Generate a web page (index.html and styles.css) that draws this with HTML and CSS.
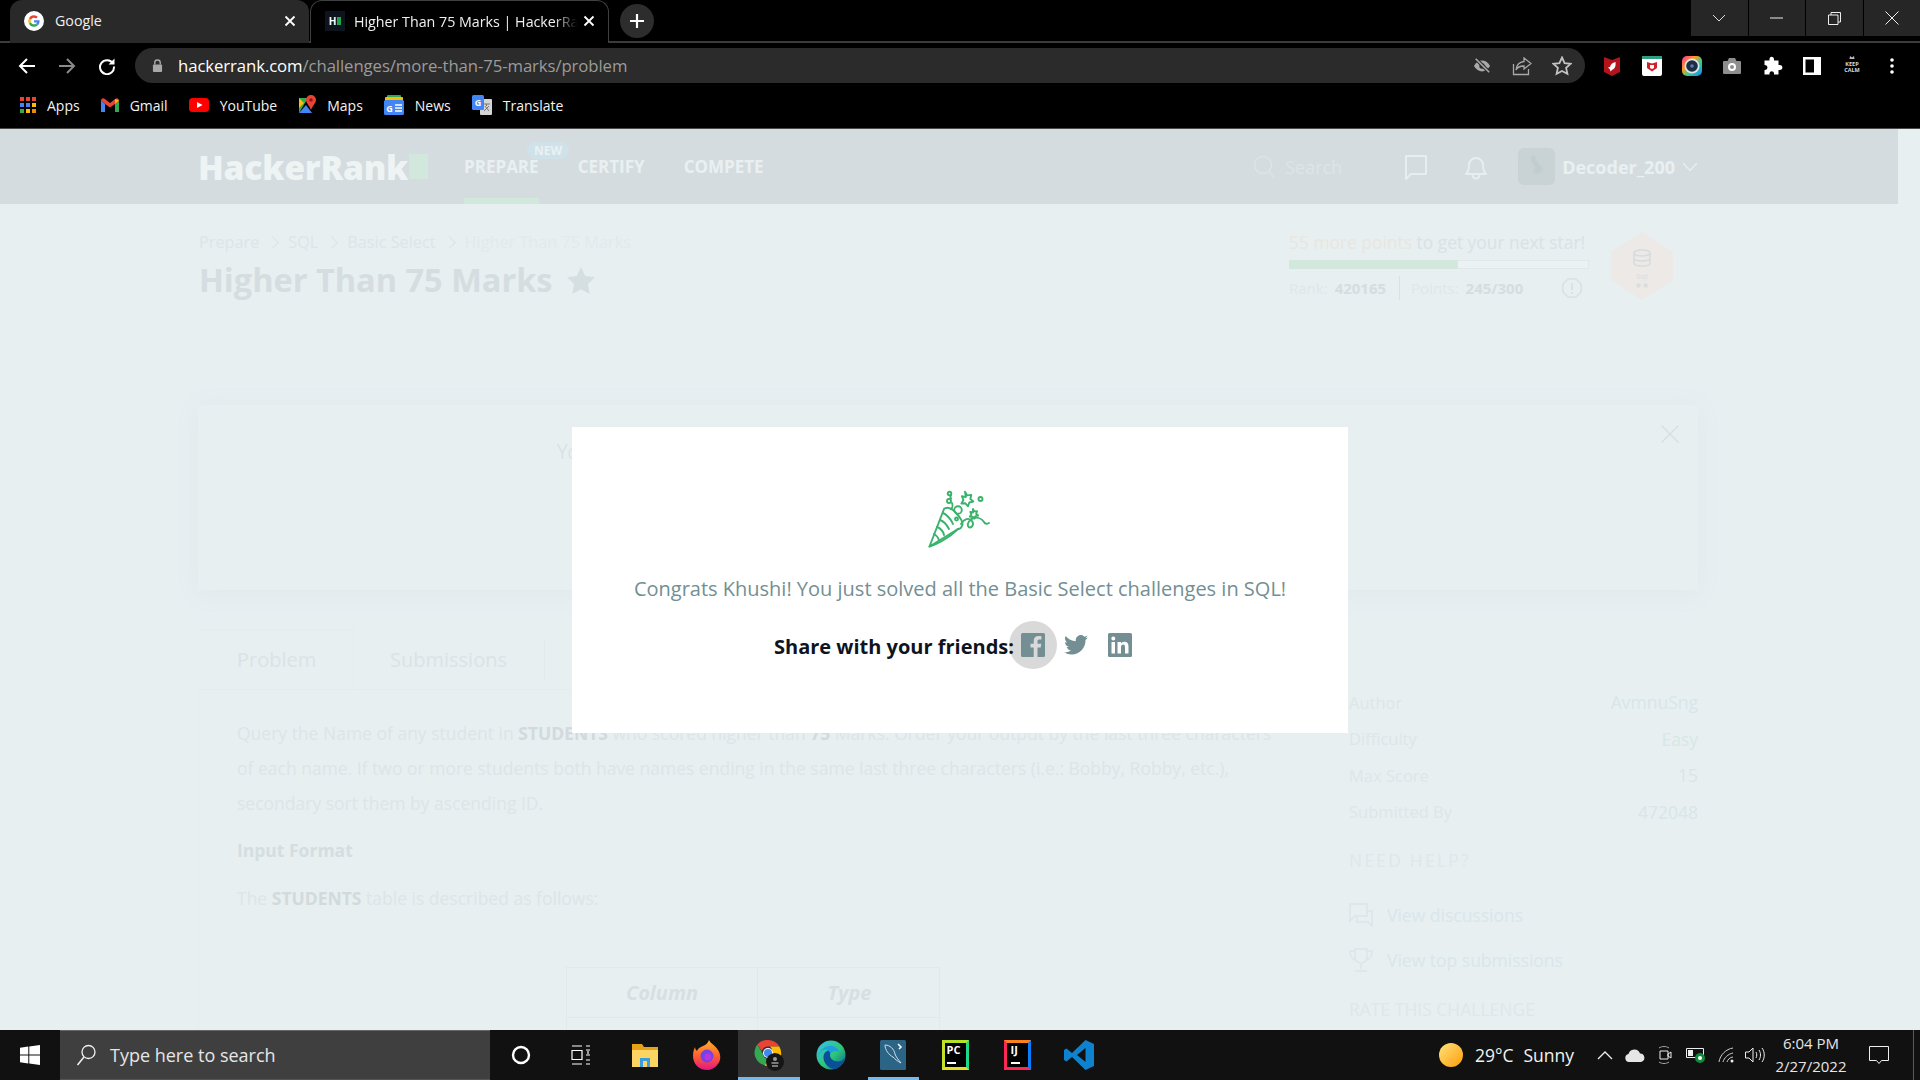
FILE: index.html
```html
<!DOCTYPE html>
<html lang="en">
<head>
<meta charset="utf-8">
<title>Higher Than 75 Marks | HackerRank</title>
<link rel="stylesheet" href="styles.css">
</head>
<body>
<div class="screen">
  <header class="chrome">
    <div class="tabstrip">
      <div class="tab tab-idle">
        <svg class="fav" viewBox="0 0 24 24" width="20" height="20"><circle cx="12" cy="12" r="12" fill="#fff"/><path d="M12 5.2a6.8 6.8 0 0 1 4.6 1.8l-2 2A4 4 0 0 0 8.300 10.500L5.900 8.800A6.800 6.800 0 0 1 12 5.200z" fill="#ea4335"/><path d="M5.900 8.800l2.400 1.800a4 4 0 0 0 0 2.800l-2.400 1.800a6.800 6.800 0 0 1 0-6.400z" fill="#fbbc05"/><path d="M5.900 15.200l2.400-1.800a4 4 0 0 0 6 1.900l2.300 1.800A6.800 6.800 0 0 1 5.900 15.200z" fill="#34a853"/><path d="M18.700 11h-6.600v2.700h3.800a3.300 3.300 0 0 1-1.600 1.600l2.300 1.800c1.400-1.300 2.300-3.200 2.100-6.100z" fill="#4285f4"/></svg>
        <span class="tab-title">Google</span>
        <svg class="tab-x" viewBox="0 0 12 12" width="12" height="12"><path d="M1.500 1.500l9 9M10.500 1.500l-9 9" stroke="#fff" stroke-width="1.800"/></svg>
      </div>
      <div class="tab tab-active">
        <span class="hr-fav"><span class="hr-fav-h">H</span><span class="hr-fav-b"></span></span>
        <span class="tab-title tab-fade">Higher Than 75 Marks | HackerRa</span>
        <svg class="tab-x" viewBox="0 0 12 12" width="12" height="12"><path d="M1.500 1.500l9 9M10.500 1.500l-9 9" stroke="#fff" stroke-width="1.800"/></svg>
      </div>
      <div class="newtab"><svg viewBox="0 0 16 16" width="16" height="16"><path d="M8 1v14M1 8h14" stroke="#fff" stroke-width="2.200"/></svg></div>
      <div class="winctl">
        <div class="winbtn"><svg viewBox="0 0 14 8" width="14" height="8"><path d="M1 1l6 6 6-6" fill="none" stroke="#ddd"/></svg></div>
        <div class="winbtn"><svg viewBox="0 0 13 2" width="13" height="2"><path d="M0 1h13" stroke="#eee"/></svg></div>
        <div class="winbtn"><svg viewBox="0 0 13 13" width="13" height="13"><path d="M.5 3h9.500v9.500H.5zM3 3V.5h9.500V10H10" fill="none" stroke="#eee"/></svg></div>
        <div class="winbtn"><svg viewBox="0 0 14 14" width="14" height="14"><path d="M.5.500l13 13M13.500.500l-13 13" stroke="#eee"/></svg></div>
      </div>
    </div>
    <div class="toolbar">
      <div class="navbtns">
        <svg viewBox="0 0 18 18" width="18" height="18"><path d="M17 9H2M9 2L2 9l7 7" fill="none" stroke="#fff" stroke-width="2"/></svg>
        <svg viewBox="0 0 18 18" width="18" height="18"><path d="M1 9h15M9 2l7 7-7 7" fill="none" stroke="#8a8a8a" stroke-width="2"/></svg>
        <svg viewBox="0 0 18 18" width="18" height="18"><path d="M15 6.500A7 7 0 1 0 16 9.500" fill="none" stroke="#fff" stroke-width="2"/><path d="M16.500 1.500v6h-6z" fill="#fff"/></svg>
      </div>
      <div class="omnibox">
        <svg class="lock" viewBox="0 0 12 14" width="11" height="13"><path d="M3 6V4a3 3 0 0 1 6 0v2" fill="none" stroke="#a8a8a8" stroke-width="1.500"/><rect x="1" y="6" width="10" height="8" rx="1" fill="#a8a8a8"/></svg>
        <span class="url"><span class="url-host">hackerrank.com</span>/challenges/more-than-75-marks/problem</span>
        <div class="omni-icons">
          <svg viewBox="0 0 20 20" width="20" height="18"><path d="M1 10c2.500-4 5.500-6 9-6s6.500 2 9 6c-2.500 4-5.500 6-9 6s-6.500-2-9-6z" fill="#a9a9a9"/><circle cx="10" cy="10" r="3" fill="#2b2b2b"/><path d="M3 2l15 15" stroke="#2b2b2b" stroke-width="4"/><path d="M3 2l15 15" stroke="#a9a9a9" stroke-width="1.800"/></svg>
          <svg viewBox="0 0 20 20" width="20" height="20"><path d="M1.500 8v10.500h15V13" fill="none" stroke="#a9a9a9" stroke-width="1.300"/><path d="M12 2l7 5.500-7 5.500V10c-4 0-6.500 1-8 4 .5-5 3.500-8 8-8.500z" fill="none" stroke="#a9a9a9" stroke-width="1.300"/></svg>
          <svg viewBox="0 0 20 20" width="20" height="20"><path d="M10 1.500l2.600 5.600 6 .7-4.500 4.100 1.300 6L10 15l-5.400 2.900 1.300-6L1.400 7.800l6-.7z" fill="none" stroke="#c2c2c2" stroke-width="1.800"/></svg>
        </div>
      </div>
      <div class="ext-icons">
        <svg viewBox="0 0 20 20" width="40" height="20"><path d="M2 1l8 3 8-3v15l-8 4-8-4z" fill="#b3141c"/><path d="M13.500 6c-3 .5-5 2.500-5.500 5l-2 .5 2 2 .5 2 2-2c2.500-.5 3.500-4 3-7.500z" fill="#fff"/></svg>
        <svg viewBox="0 0 20 20" width="40" height="20"><rect width="20" height="20" rx="2" fill="#fff"/><rect width="20" height="3" fill="#2f9e7f"/><path d="M5 6l5 1.500L15 6v6l-5 3.500L5 12z" fill="#d2202a"/><path d="M8 9v3l2 1 2-1V9z" fill="#fff"/></svg>
        <svg viewBox="0 0 20 20" width="40" height="20"><defs><linearGradient id="ring" x1="0" y1="0" x2="1" y2="1"><stop offset="0" stop-color="#ff2fa0"/><stop offset=".35" stop-color="#ff9a1f"/><stop offset=".65" stop-color="#21d0a0"/><stop offset="1" stop-color="#2b7bff"/></linearGradient></defs><rect width="20" height="20" rx="5" fill="url(#ring)"/><circle cx="10" cy="10" r="7.500" fill="#dfe6ee"/><circle cx="10" cy="10" r="5.800" fill="#1d2d44"/><circle cx="10" cy="10" r="1.800" fill="#5b7ea8"/></svg>
        <svg viewBox="0 0 20 20" width="40" height="20"><path d="M1 6a1 1 0 0 1 1-1h3.500l1.500-3h6l1.500 3H18a1 1 0 0 1 1 1v11a1 1 0 0 1-1 1H2a1 1 0 0 1-1-1z" fill="#8e8e8e"/><circle cx="10" cy="11" r="4" fill="#fff"/><circle cx="10" cy="11" r="2" fill="#8e8e8e"/></svg>
        <svg viewBox="0 0 20 20" width="40" height="20"><path d="M8 1.500a2.300 2.300 0 0 1 4 1.500v1.500h4.500V9H18a2.500 2.500 0 0 1 0 5h-1.500v4.500H12V17a2.300 2.300 0 0 0-4.500 0v1.500H2.500V14H3a2.500 2.500 0 0 0 0-5h-.5V4.500H7.500V3c0-.6.200-1.100.5-1.500z" fill="#fff"/></svg>
        <svg viewBox="0 0 18 18" width="40" height="18"><path d="M0 0h18v18H0zM2.500 2.500v13H11v-13z" fill="#fff" fill-rule="evenodd"/></svg>
        <svg viewBox="0 0 20 22" width="40" height="22"><path d="M7.500 4L8 1l2 1.500L12 1l.5 3z" fill="#bbb"/><text class="keep" x="10" y="10.500" text-anchor="middle">KEEP</text><text class="keep" x="10" y="17" text-anchor="middle">CALM</text></svg>
        <svg viewBox="0 0 4 16" width="40" height="16"><circle cx="2" cy="2" r="1.800" fill="#fff"/><circle cx="2" cy="8" r="1.800" fill="#fff"/><circle cx="2" cy="14" r="1.800" fill="#fff"/></svg>
      </div>
    </div>
    <div class="bookmarks">
      <div class="bm">
        <svg viewBox="0 0 16 16" width="16" height="16"><g><rect x="0" y="0" width="4" height="4" fill="#ea4335"/><rect x="6" y="0" width="4" height="4" fill="#ea4335"/><rect x="12" y="0" width="4" height="4" fill="#ea4335"/><rect x="0" y="6" width="4" height="4" fill="#4285f4"/><rect x="6" y="6" width="4" height="4" fill="#4285f4"/><rect x="12" y="6" width="4" height="4" fill="#fbbc05"/><rect x="0" y="12" width="4" height="4" fill="#34a853"/><rect x="6" y="12" width="4" height="4" fill="#fbbc05"/><rect x="12" y="12" width="4" height="4" fill="#ea8a05"/></g></svg>
        <span>Apps</span>
      </div>
      <div class="bm">
        <svg viewBox="0 0 18 14" width="18" height="14"><path d="M0 2.500V14h4V6z" fill="#4285f4"/><path d="M18 2.500V14h-4V6z" fill="#34a853"/><path d="M0 2.500C0 .5 2 -.5 3.500.7L9 5l5.500-4.300C16-.5 18 .5 18 2.500L14 6 9 9.500 4 6z" fill="#ea4335"/><path d="M14 .9l4 1.600L14 6z" fill="#fbbc05"/></svg>
        <span>Gmail</span>
      </div>
      <div class="bm">
        <svg viewBox="0 0 20 14" width="20" height="14"><rect width="20" height="14" rx="3.500" fill="#f00"/><path d="M8 4l5.500 3L8 10z" fill="#fff"/></svg>
        <span>YouTube</span>
      </div>
      <div class="bm">
        <svg viewBox="0 0 18 20" width="18" height="20"><path d="M1 3h9L1 18z" fill="#34a853"/><path d="M1 18l7-8 6 8z" fill="#4285f4"/><path d="M1 3l5 5-5 5z" fill="#fbbc05"/><path d="M13 0a5 5 0 0 1 5 5c0 3-3.500 5.500-5 10-1.500-4.500-5-7-5-10a5 5 0 0 1 5-5z" fill="#ea4335"/><circle cx="13" cy="5" r="1.800" fill="#8d1a12"/></svg>
        <span>Maps</span>
      </div>
      <div class="bm">
        <svg viewBox="0 0 20 20" width="20" height="20"><rect x="3" y="0" width="14" height="6" rx="1" fill="#34a853"/><rect x="1" y="2" width="18" height="5" rx="1" fill="#fbbc05"/><rect y="5" width="20" height="15" rx="1.500" fill="#4285f4"/><text class="news-g" x="5.500" y="16.500" text-anchor="middle">G</text><path d="M11 10h7M11 13h7M11 16h7" stroke="#fff" stroke-width="1.500"/></svg>
        <span>News</span>
      </div>
      <div class="bm">
        <svg viewBox="0 0 20 20" width="20" height="20"><rect x="8" y="4" width="12" height="16" rx="1" fill="#d5d5d5"/><rect width="12" height="15" rx="1.500" fill="#4285f4"/><text class="news-g" x="6" y="10.500" text-anchor="middle">G</text><path d="M11 9h7M14.500 9v2M12 16l5-5M13 11l4 5" stroke="#777" stroke-width="1"/></svg>
        <span>Translate</span>
      </div>
    </div>
  </header>

  <main class="page">
    <nav class="hr-header">
      <div class="logo"><span>HackerRank</span><span class="logo-block"></span></div>
      <div class="hr-nav">
        <a class="hr-link hr-link-active">PREPARE<span class="new-badge">NEW</span></a>
        <a class="hr-link">CERTIFY</a>
        <a class="hr-link">COMPETE</a>
      </div>
      <div class="hr-right">
        <svg class="ic-search" viewBox="0 0 22 24" width="22" height="24"><circle cx="10" cy="10" r="8.500" fill="none" stroke="#dce4e7" stroke-width="1.500"/><path d="M16 16.500l5 6" stroke="#dce4e7" stroke-width="1.500"/></svg>
        <span class="hr-search">Search</span>
        <svg class="ic-chat" viewBox="0 0 24 26" width="24" height="26"><path d="M2 2h20v18H7l-5 5z" fill="none" stroke="#e8edef" stroke-width="2" stroke-linejoin="round"/></svg>
        <svg class="ic-bell" viewBox="0 0 24 26" width="24" height="26"><path d="M2 20c2-2 3-4 3-9a7 7 0 0 1 14 0c0 5 1 7 3 9z" fill="none" stroke="#e8edef" stroke-width="2" stroke-linejoin="round"/><path d="M8.500 21a3.500 3.500 0 0 0 7 0" fill="none" stroke="#e8edef" stroke-width="2"/></svg>
        <div class="avatar"><svg viewBox="0 0 37 37" width="37" height="37"><path d="M12 10l4-3 3 6 6 8-3 4-6-7z" fill="#c3cdd0"/><circle cx="18" cy="23" r="3" fill="#bcd0cc"/></svg></div>
        <span class="hr-user">Decoder_200</span>
        <svg class="ic-chev" viewBox="0 0 16 10" width="16" height="10"><path d="M1 1l7 7.500L15 1" fill="none" stroke="#e8edef" stroke-width="1.300"/></svg>
      </div>
    </nav>

    <div class="wrap">
      <section class="titlebar">
        <div class="title-left">
          <div class="crumbs">
            <span>Prepare</span><i class="sep"></i><span>SQL</span><i class="sep"></i><span>Basic Select</span><i class="sep"></i><span class="crumb-last">Higher Than 75 Marks</span>
          </div>
          <div class="title-row">
            <h1>Higher Than 75 Marks</h1>
            <svg viewBox="0 0 32 30" width="30" height="28"><path d="M16 1l4.600 9.700 10.400 1.400-7.600 7.300 1.900 10.600L16 24.800 6.700 30l1.900-10.600L1 12.100l10.400-1.400z" fill="#d5dee1"/></svg>
          </div>
        </div>
        <div class="progress">
          <div class="progress-main">
            <div class="progress-head"><span class="pts">55 more points</span> to get your next star!</div>
            <div class="bar"><div class="bar-fill"></div></div>
            <div class="stats">
              <span>Rank:</span><b>420165</b><i class="vsep"></i><span>Points:</span><b>245/300</b>
              <svg class="ic-info" viewBox="0 0 20 20" width="20" height="20"><path d="M6 1h8l5 5v8l-5 5H6l-5-5V6z" fill="none" stroke="#d9e1e3" stroke-width="1.500" stroke-linejoin="round"/><path d="M10 5v7M10 14v2" stroke="#d9e1e3" stroke-width="1.800"/></svg>
            </div>
          </div>
          <div class="hexbadge">
            <svg viewBox="0 0 62 68" width="62" height="68"><path d="M31 0l31 20v28L31 68 0 48V20z" fill="#ece9e6"/><ellipse cx="31" cy="21" rx="8" ry="3" fill="none" stroke="#d6dcde" stroke-width="1.500"/><path d="M23 21v10c0 4 16 4 16 0V21M23 26c0 4 16 4 16 0" fill="none" stroke="#d6dcde" stroke-width="1.500"/><text class="hex-t" x="31" y="47" text-anchor="middle">Sql</text><text class="hex-s" x="31" y="56" text-anchor="middle">★★</text></svg>
          </div>
        </div>
      </section>

      <section class="notice">
        <p class="notice-text">You did it!</p>
        <svg class="notice-x" viewBox="0 0 18 18" width="18" height="18"><path d="M.5.500l17 17M17.500.500l-17 17" stroke="#d8e0e3" stroke-width="1.500"/></svg>
      </section>

      <section class="content">
        <div class="main">
          <div class="tabs">
            <div class="ctab ctab-active">Problem</div>
            <div class="ctab">Submissions</div>
          </div>
          <article class="problem">
            <p class="para">Query the Name of any student in <b>STUDENTS</b> who scored higher than <b>75</b> Marks. Order your output by the last three characters of each name. If two or more students both have names ending in the same last three characters (i.e.: Bobby, Robby, etc.), secondary sort them by ascending ID.</p>
            <p class="para-h">Input Format</p>
            <p class="para-s">The <b>STUDENTS</b> table is described as follows:</p>
            <div class="tbl">
              <div class="tcell tcell-1">Column</div>
              <div class="tcell">Type</div>
              <div class="tcell tcell-1 trow2"></div>
              <div class="tcell trow2"></div>
            </div>
          </article>
        </div>
        <aside class="side">
          <div class="kv"><span>Author</span><span class="val">AvmnuSng</span></div>
          <div class="kv"><span>Difficulty</span><span class="val val-easy">Easy</span></div>
          <div class="kv"><span>Max Score</span><span class="val val-gray">15</span></div>
          <div class="kv"><span>Submitted By</span><span class="val">472048</span></div>
          <div class="help-h">NEED HELP?</div>
          <div class="help-link help-first">
            <svg viewBox="0 0 24 24" width="24" height="24"><path d="M1 1h17v12H6l-5 5zM8 13v6h11l4 4V8h-5" fill="none" stroke="#dce5e8" stroke-width="1.500"/></svg>
            <span>View discussions</span>
          </div>
          <div class="help-link">
            <svg viewBox="0 0 24 24" width="24" height="24"><path d="M6 1h12v8a6 6 0 0 1-12 0zM6 3H1c0 5 2 8 6 9M18 3h5c0 5-2 8-6 9M12 15v6M6 23h12" fill="none" stroke="#dce5e8" stroke-width="1.500"/></svg>
            <span>View top submissions</span>
          </div>
          <div class="rate-h">RATE THIS CHALLENGE</div>
        </aside>
      </section>
    </div>

    <div class="modal">
      <svg class="party" viewBox="0 0 64 58" width="64" height="58" fill="none" stroke="#39b36b" stroke-width="1.900" stroke-linecap="round" stroke-linejoin="round">
        <path d="M1.500 56.500L16 19c3-3 9 0 12 4 4 4 8 10 6 13 0 0-1 3-4 3z"/>
        <path d="M1.500 56.500C7 55 20 49 30 39"/>
        <path d="M12 30c3 1 7 5 9 9M9 37c3 1 6 4 7 8M6 44c2 1 4 3 5 6M15 23c3 1 8 6 10 11"/>
        <circle cx="30" cy="20" r="3.800"/>
        <circle cx="28.500" cy="29" r="1.500"/>
        <path d="M37 1.800l2.300 3.600 4-.5-1 4 3 2.600-4 1-1.300 3.800-2.600-3-4 .2 2-3.500-1.500-3.800 4 .9z"/>
        <path d="M45 19l1.300 2.400 2.700-.3-.8 2.600 1.900 1.800-2.700.6-1 2.500-1.800-2-2.700.1 1.400-2.300-1-2.500 2.700.6z"/>
        <circle cx="52.500" cy="9" r="2"/>
        <circle cx="21.500" cy="3.500" r="1.800"/>
        <circle cx="21" cy="11" r="2"/>
        <path d="M23 5.500c-1 1-1 1.500 0 3M24 13c1 3 1 4-1 6"/>
        <path d="M33 34c3-5 8-7 11-3 3 4-2 9-4 5-1-3 2-7 6-8 4-1 8 1 10 4 1 2 3 2 5 1"/>
      </svg>
      <p class="congrats">Congrats Khushi! You just solved all the Basic Select challenges in SQL!</p>
      <div class="share">
        <span class="share-label">Share with your friends:</span>
        <span class="share-fb"><svg viewBox="0 0 24 24" width="24" height="24"><path d="M1.500 0h21A1.500 1.500 0 0 1 24 1.500v21a1.500 1.500 0 0 1-1.500 1.500h-6v-9.500h3.200l.5-3.700h-3.700V8.400c0-1.100.3-1.800 1.900-1.800h2V3.200c-.4 0-1.500-.2-2.900-.2-2.900 0-4.800 1.700-4.800 5v2.800H9.500v3.700h3.200V24H1.500A1.500 1.500 0 0 1 0 22.500v-21A1.500 1.500 0 0 1 1.500 0z" fill="#738f93"/></svg></span>
        <svg class="share-tw" viewBox="0 0 24 20" width="24" height="20"><path d="M24 2.400c-.9.400-1.800.7-2.800.8 1-.6 1.800-1.600 2.200-2.700-1 .6-2 1-3.100 1.200A4.900 4.900 0 0 0 11.900 6.200 14 14 0 0 1 1.700.9a4.900 4.900 0 0 0 1.500 6.600c-.8 0-1.600-.2-2.200-.6v.1c0 2.400 1.700 4.400 3.900 4.800-.7.200-1.500.2-2.200.1.600 2 2.400 3.400 4.600 3.400A9.900 9.900 0 0 1 0 17.300 14 14 0 0 0 7.500 19.500c9 0 14-7.500 14-14v-.6c1-.7 1.800-1.500 2.500-2.500z" fill="#738f93"/></svg>
        <svg class="share-in" viewBox="0 0 24 24" width="24" height="24"><path fill-rule="evenodd" d="M1.500 0h21A1.500 1.500 0 0 1 24 1.500v21a1.500 1.500 0 0 1-1.500 1.500h-21A1.500 1.500 0 0 1 0 22.500v-21A1.500 1.500 0 0 1 1.500 0zM3.500 9v11.500H7V9zM5.300 3.500a2 2 0 1 0 0 4 2 2 0 0 0 0-4zM9.500 9v11.500H13v-6c0-1.600.5-3 2.200-3 1.600 0 1.800 1.500 1.800 3.100v5.900h3.500V14c0-3.200-.8-5.300-4.300-5.300-1.700 0-2.700.9-3.200 1.800V9z" fill="#738f93"/></svg>
      </div>
    </div>
  </main>

  <footer class="taskbar">
    <div class="tb-start"><svg viewBox="0 0 20 20" width="20" height="20"><path d="M0 2.800L8.300 1.600v7.900H0zM9.300 1.500L20 0v9.500H9.300zM0 10.500h8.300v7.900L0 17.200zM9.300 10.500H20V20L9.300 18.500z" fill="#fff"/></svg></div>
    <div class="tb-search">
      <svg viewBox="0 0 20 22" width="20" height="22"><circle cx="12.500" cy="8" r="6.500" fill="none" stroke="#f0f0f0" stroke-width="1.300"/><path d="M8 13L1.500 21" stroke="#f0f0f0" stroke-width="1.500"/></svg>
      <span>Type here to search</span>
    </div>
    <div class="tb-item"><svg viewBox="0 0 20 20" width="20" height="20"><circle cx="10" cy="10" r="8" fill="none" stroke="#fff" stroke-width="2.400"/></svg></div>
    <div class="tb-item tb-tview"><svg viewBox="0 0 20 20" width="20" height="20"><path d="M1 1h10M1 19h10M1 5.500h10v9H1zM15 1h4M15 5h4M15 10h4M15 15h4M15 19h4M17 6v3" fill="none" stroke="#fff" stroke-width="1.200"/></svg></div>
    <div class="tb-item"><svg viewBox="0 0 28 28" width="28" height="28"><path d="M1 3h10l2 3h14v4H1z" fill="#e6a117"/><path d="M1 9h26v17H1z" fill="#fcd462"/><path d="M9 17h10v9H9z" fill="#3b9ddd"/><path d="M12 20h4v6h-4z" fill="#fcd462"/></svg></div>
    <div class="tb-item"><svg viewBox="0 0 28 30" width="28" height="30"><defs><linearGradient id="ffx" x1="0" y1="0" x2="0" y2="1"><stop offset="0" stop-color="#ffb52e"/><stop offset=".55" stop-color="#ff5b30"/><stop offset="1" stop-color="#e31587"/></linearGradient></defs><path d="M16 0c1 3 6 5 9 10 3 5 3 10 0 14-3 4-7 6-11 6C6 30 0 24 0 16c0-4 1-7 2-9 0 2 1 3 2 4 1-3 4-4 6-5 3-1 5-3 6-6z" fill="url(#ffx)"/><circle cx="14" cy="16" r="6.500" fill="#7542e5"/><circle cx="15" cy="17" r="3.500" fill="#b833e1"/></svg></div>
    <div class="tb-item tb-active"><svg viewBox="0 0 30 32" width="30" height="32"><path d="M14 1a13 13 0 0 1 11.300 6.500H14a6.500 6.500 0 0 0-6.200 4.500L3.300 5.500A13 13 0 0 1 14 1z" fill="#ea4335"/><path d="M3.300 5.500L9 15a5.500 5.500 0 0 0 5 5l-3.500 6.200A13 13 0 0 1 3.300 5.500z" fill="#34a853"/><path d="M25.300 7.500A13 13 0 0 1 10.500 26.500L17 15a6 6 0 0 0-1-7.500z" fill="#fbbc05"/><circle cx="14" cy="14" r="5" fill="#fff"/><circle cx="14" cy="14" r="4" fill="#4285f4"/><circle cx="21" cy="23" r="9" fill="#151515"/><circle cx="21" cy="20" r="2" fill="#9a9a9a"/><path d="M17.500 24h7M18 27h6" stroke="#9a9a9a" stroke-width="1.500"/></svg></div>
    <div class="tb-item"><svg viewBox="0 0 30 30" width="30" height="30"><defs><linearGradient id="edg" x1="0" y1="0" x2="1" y2="1"><stop offset="0" stop-color="#35c1f1"/><stop offset=".55" stop-color="#2dc774"/><stop offset="1" stop-color="#0c59a4"/></linearGradient></defs><circle cx="15" cy="15" r="14.500" fill="url(#edg)"/><path d="M29 17c-1 3-4 4.500-7 4.500-5 0-8-3-8-6.500 0-2.500 2-4.500 3.500-5.200C13 9 8 11 7.500 16.500 7 23 13 29 19 29c5-1 9-6 10-12z" fill="#0a4f99"/><path d="M14.500 14.500c.2-3 5-4.500 9-2.500-2-5-8-8-14-5C5 9 2 14 2 18 4 8 13 7 14.500 14.500z" fill="#1f9de0"/></svg></div>
    <div class="tb-item tb-open"><svg viewBox="0 0 26 30" width="26" height="30"><rect width="26" height="30" rx="1.500" fill="#2c6485"/><path d="M5 5c5 0 9 4 10 9 1 3 3 5 6 9-4-2-6-4-8-6-4-2-8-7-8-12z" fill="none" stroke="#cfe0ea" stroke-width="1"/><path d="M18 4l3 3-2 2" fill="none" stroke="#fff" stroke-width="1.500"/></svg></div>
    <div class="tb-item"><span class="ide ide-pc"><span>PC</span><i></i></span></div>
    <div class="tb-item"><span class="ide ide-ij"><span>IJ</span><i></i></span></div>
    <div class="tb-item"><svg viewBox="0 0 30 30" width="30" height="30"><path d="M21.500 0L30 4v22l-8.500 4L8 17l-5.500 4.500L0 20v-10l2.500-1.500L8 13zM21.500 8L13 15l8.500 7z" fill="#0f82cf"/></svg></div>
    <div class="tray">
      <span class="sun"></span>
      <span class="temp">29°C</span>
      <span class="cond">Sunny</span>
      <svg class="tr-caret" viewBox="0 0 16 9" width="16" height="9"><path d="M1 8l7-7 7 7" fill="none" stroke="#eee" stroke-width="1.300"/></svg>
      <svg class="tr-cloud" viewBox="0 0 20 13" width="20" height="13"><path d="M4 13a4 4 0 0 1-.5-7.900A6 6 0 0 1 15 4.500 4.300 4.300 0 0 1 16 13z" fill="#e6e6e6"/></svg>
      <svg class="tr-cam" viewBox="0 0 14 20" width="14" height="20"><path d="M2 6h8v8H2zM10 9l3-2v6l-3-2z" fill="none" stroke="#eee"/><path d="M1 3c3-2 7-2 10 0M1 17c3 2 7 2 10 0" fill="none" stroke="#aaa"/></svg>
      <svg class="tr-bat" viewBox="0 0 20 16" width="20" height="16"><path d="M.5 1.500h17v9H.5z" fill="none" stroke="#eee"/><rect x="2" y="3" width="5" height="6" fill="#eee"/><circle cx="14" cy="11" r="5" fill="#0f8a3c"/><circle cx="14" cy="11" r="2" fill="#fff"/></svg>
      <svg class="tr-wifi" viewBox="0 0 20 16" width="20" height="16"><path d="M1 15C2 8 8 2 15 1M5 15c1-4 5-8 10-9M9 15c.5-2 3-5 6-5" fill="none" stroke="#ccc"/><circle cx="14" cy="14" r="1.500" fill="#eee"/></svg>
      <svg class="tr-vol" viewBox="0 0 20 16" width="20" height="16"><path d="M.5 5h3.500l4-4v14l-4-4H.5z" fill="none" stroke="#eee"/><path d="M11 5c1 2 1 4 0 6M14 3c2 3 2 7 0 10M17 1c3 4 3 10 0 14" fill="none" stroke="#eee"/></svg>
      <div class="clock"><span>6:04 PM</span><span>2/27/2022</span></div>
      <svg class="tr-note" viewBox="0 0 20 19" width="20" height="19"><path d="M.5.500h19v14h-7l-2.500 3-2.500-3h-7z" fill="none" stroke="#eee"/></svg>
      <span class="tr-show"></span>
    </div>
  </footer>
</div>
</body>
</html>
```

FILE: styles.css
```css
* { box-sizing: border-box; }
html, body { margin: 0; padding: 0; height: 100%; overflow: hidden; }
body { font-family: "Open Sans", "Noto Sans", sans-serif; background: #000; }
p, h1 { margin: 0; }
i { font-style: normal; }

.screen { width: 1920px; height: 1080px; display: flex; flex-direction: column; }

/* browser chrome */
.chrome { height: 129px; background: #000; border-bottom: 1px solid #4a4a4a; flex: none; color: #fff; }
.tabstrip { height: 43px; display: flex; padding-left: 10px; border-bottom: 2px solid #3b3b3b; }
.tab { width: 299px; height: 43px; display: flex; align-items: center; padding: 0 13px 2px 14px; border-radius: 12px 12px 0 0; flex: none; }
.tab-idle { background: #292929; }
.tab-active { background: #000; border: 1px solid #3f3f3f; border-bottom: 0; margin-left: 1px; }
.fav { flex: none; }
.tab-title { font-size: 14.250px; margin-left: 11px; flex: 1; white-space: nowrap; overflow: hidden; color: #f0f0f0; }
.tab-fade { margin-left: 9px; -webkit-mask-image: linear-gradient(90deg, #000 90%, transparent 100%); mask-image: linear-gradient(90deg, #000 90%, transparent 100%); }
.tab-x { flex: none; margin-left: 6px; }
.hr-fav { width: 20px; height: 20px; background: #0e141e; display: flex; align-items: center; justify-content: center; gap: 1px; flex: none; }
.hr-fav-h { font-size: 10px; font-weight: 700; color: #fff; line-height: 1; }
.hr-fav-b { width: 4px; height: 8px; background: #1ba94c; }
.newtab { width: 34px; height: 34px; border-radius: 50%; background: #2d2d2d; margin: 4px 0 0 11px; display: flex; align-items: center; justify-content: center; flex: none; }
.winctl { margin-left: auto; display: flex; height: 36px; width: 229px; gap: 1px; background: #000; }
.winbtn { flex: 1; background: #262626; display: flex; align-items: center; justify-content: center; }

.toolbar { height: 44px; padding-top: 5px; display: flex; align-items: flex-start; }
.navbtns { width: 135px; height: 35px; display: flex; align-items: center; padding-left: 18px; gap: 22px; flex: none; }
.omnibox { width: 1450px; height: 35px; border-radius: 18px; background: #2b2b2b; display: flex; align-items: center; padding-left: 17px; flex: none; }
.lock { flex: none; }
.url { font-size: 16.750px; margin-left: 15px; color: #9b9b9b; white-space: nowrap; letter-spacing: -.1px; }
.url-host { color: #fff; }
.omni-icons { margin-left: auto; display: flex; align-items: center; gap: 20px; padding-right: 13px; }
.ext-icons { flex: 1; height: 35px; display: flex; align-items: center; padding-left: 7px; }
.ext-icons svg { flex: none; }
.keep { font: 700 5.500px "Open Sans", sans-serif; fill: #ddd; }

.bookmarks { height: 41px; padding: 0 0 5px 20px; display: flex; align-items: center; gap: 21px; font-size: 14px; color: #f2f2f2; }
.bm { display: flex; align-items: center; gap: 11px; }
.news-g { font: 700 9px "Open Sans", sans-serif; fill: #fff; }

/* dimmed page */
.page { flex: 1; min-height: 0; position: relative; overflow: hidden; background: #e7eff1; }
.hr-header { width: 1898px; height: 75px; padding-left: 198px; background: #d4dce0; display: flex; align-items: stretch; }
.logo { display: flex; align-items: center; gap: 1px; font-size: 33.800px; font-weight: 800; color: #eef3f4; letter-spacing: -.3px; }
.logo-block { width: 19px; height: 25px; background: #d3e8dd; }
.hr-nav { display: flex; margin-left: 36px; gap: 39px; }
.hr-link { position: relative; display: flex; align-items: center; font-size: 17px; font-weight: 700; color: #eaf0f1; }
.hr-link-active { border-bottom: 6px solid #d3e8dd; padding: 6px 0 0; }
.new-badge { position: absolute; left: 63px; top: 13px; width: 42px; height: 17px; border-radius: 9px; background: #cfe2e9; color: #e9f1f4; font-size: 12px; line-height: 17px; text-align: center; }
.hr-right { margin-left: auto; display: flex; align-items: center; padding-right: 200px; }
.hr-search { font-size: 18px; color: #dde5e8; margin: 0 0 0 10px; width: 119px; }
.ic-bell { margin-left: 36px; }
.avatar { width: 37px; height: 37px; border-radius: 6px; background: #c9d2d5; margin-left: 30px; }
.hr-user { font-size: 18px; font-weight: 700; color: #eaf0f1; margin-left: 7px; }
.ic-chev { margin-left: 7px; }

.wrap { width: 1500px; margin-left: 198px; }
.titlebar { height: 201px; display: flex; justify-content: space-between; padding-top: 26px; }
.crumbs { display: flex; align-items: center; gap: 9px; font-size: 16.250px; color: #dde5e8; line-height: 24px; padding-left: 1px; }
.sep { width: 9px; height: 9px; border-top: 1px solid #dbe3e6; border-right: 1px solid #dbe3e6; transform: rotate(45deg); margin-right: 2px; }
.crumb-last { color: #e2eaec; }
.title-row { display: flex; align-items: center; gap: 14px; margin-top: 2px; }
.title-row h1 { font-size: 32.500px; font-weight: 700; color: #d5dde0; line-height: 48px; padding-left: 1px; }
.progress { display: flex; padding-right: 25px; gap: 22px; }
.progress-main { width: 300px; }
.progress-head { font-size: 17.400px; line-height: 24px; color: #dbe1e4; white-space: nowrap; }
.pts { color: #e9e6df; }
.bar { height: 9px; margin-top: 6px; background: #eaf2f3; border: 1px solid #e0e8ea; }
.bar-fill { width: 169px; background: #d3e8dd; margin: -1px 0 0 -1px; height: 9px; }
.stats { display: flex; align-items: center; gap: 7px; font-size: 15px; color: #dfe7e9; margin-top: 7px; height: 24px; }
.stats b { color: #d5dde0; font-weight: 700; }
.vsep { width: 1px; height: 24px; background: #d9e1e3; margin: 0 4px 0 6px; }
.ic-info { margin-left: auto; margin-right: 7px; }
.hexbadge { padding-top: 2px; }
.hex-t { font: 8px "Open Sans", sans-serif; fill: #d6dcde; }
.hex-s { font: 8px "DejaVu Sans", sans-serif; fill: #d6dcde; }

.notice { height: 185px; background: #e7eff1; box-shadow: 0 3px 22px #dfe8eb; display: flex; justify-content: space-between; padding: 20px 19px 0 359px; }
.notice-text { font-size: 20px; color: #d5dde0; padding-top: 13px; line-height: 28px; font-weight: 300; }
.notice-x { flex: none; }

.content { display: flex; margin-top: 40px; }
.main { width: 1110px; flex: none; }
.tabs { display: flex; height: 60px; border-bottom: 1px solid #e3ecee; }
.ctab { font-size: 20px; color: #dbe3e5; display: flex; align-items: center; padding: 0 39px; border-right: 1px solid #e2eaec; }
.ctab:nth-child(2) { padding: 0 37px 0 36px; height: 42px; align-self: center; }
.ctab-active { width: 156px; border-right: 1px solid #e3ecee; box-shadow: 0 -1px 0 #e3ecee; }
.problem { border-left: 1px solid #e3ecee; padding: 26px 20px 0 38px; font-size: 17.500px; line-height: 35px; color: #dde5e7; }
.problem b { color: #d2dadc; font-weight: 700; }
.para-h { font-weight: 700; color: #d5dde0; margin-top: 12px; }
.para-s { margin-top: 13px; }
.tbl { display: grid; grid-template-columns: 191px 183px; width: 374px; margin: 51px 0 0 329px; border: 1px solid #e1e9eb; }
.tcell { height: 50px; display: flex; align-items: center; justify-content: center; font-size: 20px; font-weight: 700; font-style: italic; color: #d7dfe2; border-bottom: 1px solid #e1e9eb; }
.tcell-1 { border-right: 1px solid #e1e9eb; }
.trow2 { height: 60px; }

.side { width: 388px; margin-left: 4px; padding: 0 0 0 37px; font-size: 16.500px; color: #dee6e8; }
.kv { display: flex; justify-content: space-between; height: 36.500px; align-items: center; }
.kv:first-child { margin-top: 54px; }
.val { color: #d8e5eb; font-size: 17.500px; }
.val-easy { color: #d6e8e4; }
.val-gray { color: #dce4e6; }
.help-h { font-size: 17.500px; letter-spacing: 2.200px; color: #dfe7e9; margin-top: 18px; line-height: 24px; }
.help-link { display: flex; align-items: center; gap: 14px; height: 45px; color: #d9e6ec; font-size: 17.500px; }
.help-first { margin-top: 20px; }
.rate-h { font-size: 17.500px; color: #dfe7e9; margin-top: 15px; line-height: 24px; }

/* modal */
.modal { position: absolute; left: 572px; top: 298px; width: 776px; height: 306px; background: #fff; display: flex; flex-direction: column; align-items: center; padding-top: 63px; }
.party { flex: none; }
.congrats { font-size: 20px; line-height: 30px; color: #738f93; margin-top: 26px; white-space: nowrap; }
.share { align-self: stretch; display: flex; align-items: center; padding-left: 202px; height: 48px; margin-top: 18px; }
.share-label { font-size: 20px; font-weight: 700; color: #0e141e; white-space: nowrap; position: relative; z-index: 1; }
.share-fb { width: 48px; height: 48px; border-radius: 50%; background: #d9d9d9; display: flex; align-items: center; justify-content: center; margin: -2px 0 0 -5px; flex: none; }
.share-tw { margin: -2px 0 0 7px; }
.share-in { margin: -2px 0 0 20px; }

/* taskbar */
.taskbar { height: 50px; flex: none; background: #111; display: flex; align-items: stretch; color: #f2f2f2; }
.tb-start { width: 60px; display: flex; align-items: center; justify-content: center; }
.tb-search { width: 430px; background: #3f3f3f; border-top: 1px solid #666; border-bottom: 1px solid #555; display: flex; align-items: center; padding-left: 16px; gap: 14px; font-size: 18px; color: #e6e6e6; flex: none; }
.tb-item { width: 62px; display: flex; align-items: center; justify-content: center; flex: none; }
.tb-tview { padding-right: 4px; }
.tb-active { background: #333 linear-gradient(#76b9ed, #76b9ed) left bottom / 100% 3px no-repeat; }
.tb-open { background: linear-gradient(#76b9ed, #76b9ed) center bottom / 51px 3px no-repeat; }
.ide { width: 27px; height: 30px; background: #000; display: flex; flex-direction: column; padding: 3px 4px; font-size: 11px; line-height: 12px; font-weight: 700; color: #fff; }
.ide i { width: 9px; height: 2px; background: #fff; margin-top: 6px; }
.ide-pc { border: 3px solid; border-color: #b6e024 #21d789 #e6e01c #c6e02a; padding: 1px 2px; }
.ide-ij { border: 3px solid; border-color: #fc801d #087cfa #fe2857 #fe2857; padding: 1px 4px; }
.tray { margin-left: auto; display: flex; align-items: center; }
.sun { width: 24px; height: 24px; border-radius: 50%; background: linear-gradient(135deg, #ffe37a, #ff9d0a); }
.temp { font-size: 17.500px; margin-left: 12px; }
.cond { font-size: 17.500px; margin-left: 10px; }
.tr-caret { margin-left: 23px; }
.tr-cloud { margin-left: 12px; }
.tr-cam { margin-left: 13px; }
.tr-bat { margin-left: 14px; }
.tr-wifi { margin-left: 12px; }
.tr-vol { margin-left: 7px; }
.clock { width: 92px; display: flex; flex-direction: column; align-items: center; font-size: 15px; line-height: 23px; color: #e6e6e6; }
.tr-note { margin-left: 12px; }
.tr-show { width: 1px; height: 50px; background: #5a5a5a; margin-left: 24px; margin-right: 6px; }
```
